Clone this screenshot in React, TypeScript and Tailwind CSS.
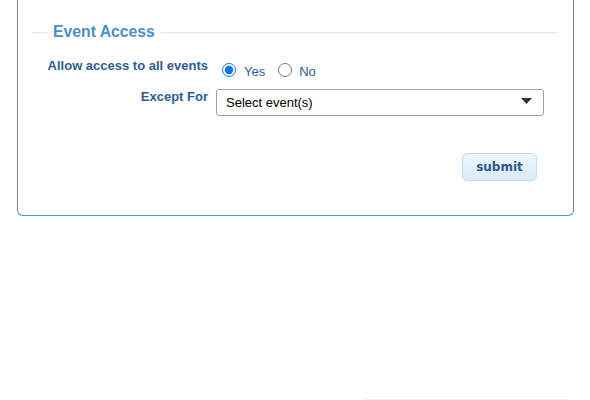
import React from 'react'

const App = () => {
  return (
    <div className="w-[590px] h-[400px] bg-white overflow-hidden font-['Liberation_Sans',Arial,sans-serif]">
      <div className="ml-[17px] w-[557px] h-[216px] border border-t-0 border-[#3a9ae0] border-l-[#808080] border-r-[#808080] rounded-b-[6px] flex flex-col">
        <div className="mt-[22px] ml-[14px] mr-[15px] h-[20px] flex items-center">
          <div className="h-px w-[15px] bg-[#d4e8f6]" />
          <span className="px-[6px] text-[15.75px] leading-[20px] font-bold text-[#4a8fc5]">Event Access</span>
          <div className="h-px flex-1 bg-[#d4e8f6]" />
        </div>

        <div className="mt-[16px] flex h-[31px]">
          <div className="w-[190px] text-right text-[13px] leading-[16px] font-bold text-[#2d5e8f]">Allow access to all events</div>
          <div className="ml-[14px] mt-[5px] flex items-center h-[14px] text-[13px] text-[#2d5e8f]">
            <input type="radio" name="all" defaultChecked className="w-[14px] h-[14px] m-0 accent-[#0a75f0]" />
            <span className="ml-[8px] mt-[3px]">Yes</span>
            <input type="radio" name="all" className="ml-[13px] w-[14px] h-[14px] m-0 accent-[#0a75f0]" />
            <span className="ml-[7px] mt-[3px]">No</span>
          </div>
        </div>

        <div className="flex">
          <div className="w-[190px] text-right text-[13px] leading-[16px] font-bold text-[#2d5e8f]">Except For</div>
          <div className="ml-[8px] w-[328px] h-[27px] border border-[#a0a0a0] rounded-[3px] bg-white flex items-center pl-[9px] pr-[11px]">
            <span className="flex-1 text-[13px] text-black">Select event(s)</span>
            <svg width="11" height="6" viewBox="0 0 11 6" className="mb-[3px]">
              <path d="M0 0 L11 0 L5.5 6 Z" fill="#333" />
            </svg>
          </div>
        </div>

        <div className="mt-[37px] mr-[36px] flex justify-end">
          <button className="w-[75px] h-[28px] rounded-[5px] border border-[#c3dbf0] bg-gradient-to-b from-[#edf5fc] to-[#dcebf8] text-[12px] font-bold text-[#2d5a88] font-['DejaVu_Sans',sans-serif]">
            submit
          </button>
        </div>
      </div>
      <div className="mt-[183px] ml-[364px] w-[204px] h-px bg-[#eeeeee]" />
    </div>
  )
}

export default App
